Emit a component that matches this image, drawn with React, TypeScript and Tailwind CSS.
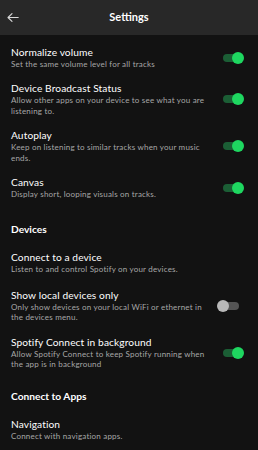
import React from "react";

interface RowProps {
  title: string;
  sub: string[];
  toggle?: "on" | "off";
  className?: string;
}

function Toggle({ on }: { on: boolean }) {
  return (
    <div className="relative mr-[19px] h-[8px] w-[16px] shrink-0">
      <div className={`h-full w-full rounded-full ${on ? "bg-[#1b5e35]" : "bg-[#545454]"}`} />
      <div
        className={`absolute top-1/2 h-[12px] w-[12px] -translate-y-1/2 rounded-full ${
          on ? "right-[-5px] bg-[#1ed760]" : "left-[-6px] bg-[#b9b9b9]"
        }`}
      />
    </div>
  );
}

function Row({ title, sub, toggle, className }: RowProps) {
  return (
    <div className={`flex items-center ${className ?? ""}`}>
      <div className="min-w-0 flex-1 pl-[11px] pr-[10px]">
        <p className="text-[10.2px] leading-[12px] tracking-[0.1px] text-white">{title}</p>
        <div className="mt-[1px]">
          {sub.map((line) => (
            <p key={line} className="whitespace-nowrap text-[8px] leading-[10.4px] tracking-[0.2px] text-[#a7a7a7]">
              {line}
            </p>
          ))}
        </div>
      </div>
      {toggle ? <Toggle on={toggle === "on"} /> : null}
    </div>
  );
}

function SectionTitle({ children, className }: { children: React.ReactNode; className?: string }) {
  return (
    <p className={`pl-[11px] text-[10.2px] font-bold leading-[12px] text-white ${className ?? ""}`}>{children}</p>
  );
}

export default function App() {
  return (
    <div className="h-[450px] w-[258px] overflow-hidden bg-[#121212] font-['Lato',sans-serif]">
      <header className="relative flex h-[35px] items-center justify-center bg-[#282828]">
        <svg
          className="absolute left-[7px] top-[12px]"
          width="12"
          height="11"
          viewBox="0 0 12 11"
          fill="none"
          stroke="#d9d9d9"
          strokeWidth="1.1"
          strokeLinecap="round"
          strokeLinejoin="round"
        >
          <path d="M11.2 5.5H1M5 1.6L1 5.5l4 3.9" />
        </svg>
        <h1 className="text-[11px] font-bold text-white">Settings</h1>
      </header>

      <div className="flex flex-col">
        <Row className="mt-[11px]" title="Normalize volume" sub={["Set the same volume level for all tracks"]} toggle="on" />
        <Row
          className="mt-[13px]"
          title="Device Broadcast Status"
          sub={["Allow other apps on your device to see what you are", "listening to."]}
          toggle="on"
        />
        <Row
          className="mt-[13px]"
          title="Autoplay"
          sub={["Keep on listening to similar tracks when your music", "ends."]}
          toggle="on"
        />
        <Row className="mt-[13px]" title="Canvas" sub={["Display short, looping visuals on tracks."]} toggle="on" />

        <SectionTitle className="mt-[24px]">Devices</SectionTitle>
        <Row className="mt-[16px]" title="Connect to a device" sub={["Listen to and control Spotify on your devices."]} />
        <Row
          className="mt-[14px]"
          title="Show local devices only"
          sub={["Only show devices on your local WiFi or ethernet in", "the devices menu."]}
          toggle="off"
        />
        <Row
          className="mt-[13px]"
          title="Spotify Connect in background"
          sub={["Allow Spotify Connect to keep Spotify running when", "the app is in background"]}
          toggle="on"
        />

        <SectionTitle className="mt-[21px]">Connect to Apps</SectionTitle>
        <Row className="mt-[16px]" title="Navigation" sub={["Connect with navigation apps."]} />
      </div>
    </div>
  );
}
